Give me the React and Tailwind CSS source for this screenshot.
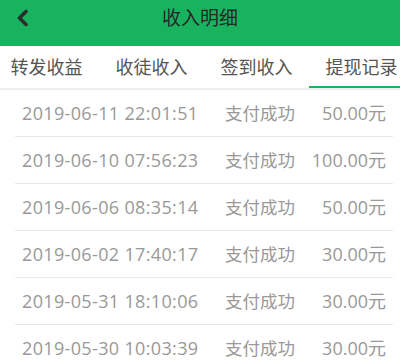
import React, { useState } from 'react';

const tabs = ['转发收益', '收徒收入', '签到收入', '提现记录'];

const records = [
  { time: '2019-06-11 22:01:51', status: '支付成功', amount: '50.00元' },
  { time: '2019-06-10 07:56:23', status: '支付成功', amount: '100.00元' },
  { time: '2019-06-06 08:35:14', status: '支付成功', amount: '50.00元' },
  { time: '2019-06-02 17:40:17', status: '支付成功', amount: '30.00元' },
  { time: '2019-05-31 18:10:06', status: '支付成功', amount: '30.00元' },
  { time: '2019-05-30 10:03:39', status: '支付成功', amount: '30.00元' },
];

const App = () => {
  const [active, setActive] = useState(3);

  return (
    <div className="w-[400px] h-[363px] overflow-hidden bg-white font-['Open_Sans','Noto_Sans_CJK_SC',sans-serif]">
      {/* 顶部栏 */}
      <div className="h-[46px] bg-[#19b360] flex items-center relative">
        <button className="w-[46px] h-[36px] flex items-center justify-center self-start mt-0">
          <svg width="14" height="18" viewBox="0 0 14 18" className="ml-[-1px]">
            <polyline points="10,2.5 3.5,9 10,15.5" fill="none" stroke="#2d2d2d" strokeWidth="3.6" strokeLinecap="round" strokeLinejoin="round" />
          </svg>
        </button>
        <div className="absolute left-0 right-0 top-0 h-[36px] flex items-center justify-center text-[19px] text-[#262626] pointer-events-none">
          收入明细
        </div>
      </div>

      {/* 标签 */}
      <div className="border-b-2 border-[#eeeeee]">
        <div className="flex h-[42px] -ml-[6px] overflow-hidden">
          {tabs.map((tab, i) => (
            <button
              key={tab}
              onClick={() => setActive(i)}
              className="relative shrink-0 w-[105px] flex items-center justify-center text-[18px] text-[#555]"
            >
              {tab}
              {active === i && (
                <span className="absolute left-0 right-0 bottom-0 h-[2px] bg-[#19b360]" />
              )}
            </button>
          ))}
        </div>
      </div>

      {/* 列表 */}
      <div className="ml-[15px] mr-[7px]">
        {records.map((r, i) => (
          <div key={i} className="h-[47px] flex items-center border-b border-[#e8e8e8] px-[7px] text-[#999] text-[17.5px]">
            <span className="w-[203px] text-[18px] tracking-[0.35px]">{r.time}</span>
            <span className="w-[80px]">{r.status}</span>
            <span className="flex-1 text-right text-[18px]">{r.amount}</span>
          </div>
        ))}
      </div>
    </div>
  );
};

export default App;
